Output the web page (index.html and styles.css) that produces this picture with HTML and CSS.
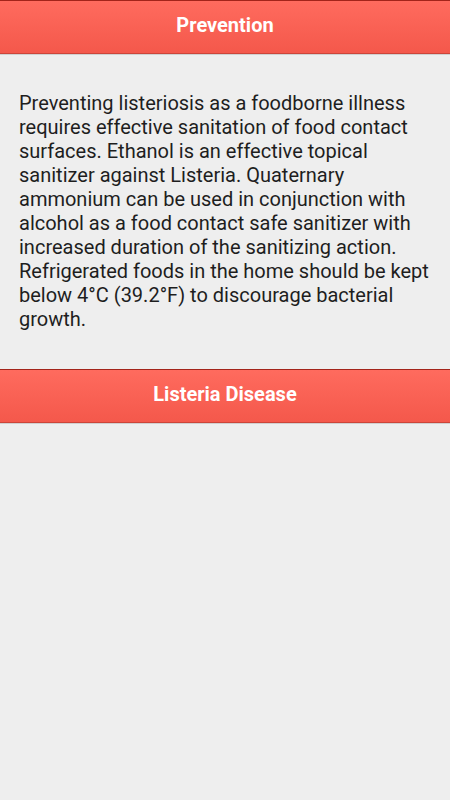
FILE: index.html
```html
<!DOCTYPE html>
<html lang="en">
<head>
  <meta charset="UTF-8" />
  <meta name="viewport" content="width=device-width, initial-scale=1.0"/>
  <title>Prevention</title>
  <link rel="stylesheet" href="styles.css">
</head>
<body>

  <div class="bar">Prevention</div>

  <div class="content">
    <p>Preventing listeriosis as a foodborne illness requires effective sanitation of food contact surfaces. Ethanol is an effective topical sanitizer against Listeria. Quaternary ammonium can be used in conjunction with alcohol as a food contact safe sanitizer with increased duration of the sanitizing action. Refrigerated foods in the home should be kept below 4°C (39.2°F) to discourage bacterial growth.</p>
  </div>

  <div class="bar">Listeria Disease</div>

</body>
</html>
```

FILE: styles.css
```css
* {
  box-sizing: border-box;
  margin: 0;
  padding: 0;
  font-family: 'Roboto', sans-serif;
}

body {
  background-color: #eeeeee;
  min-height: 100vh;
}

.bar {
  height: 54px;
  background: linear-gradient(to bottom, #ff6b5e, #f4584b);
  border-top: 1px solid #a3241a;
  border-bottom: 1px solid #cc4539;
  box-shadow: 0 1px 0 #d0d0d0;
  color: #fff;
  font-size: 20px;
  font-weight: bold;
  text-align: center;
  line-height: 49px;
}

.content {
  padding: 37px 19px 38px;
}

.content p {
  font-size: 20px;
  line-height: 24px;
  color: #1e1e1e;
}
```
